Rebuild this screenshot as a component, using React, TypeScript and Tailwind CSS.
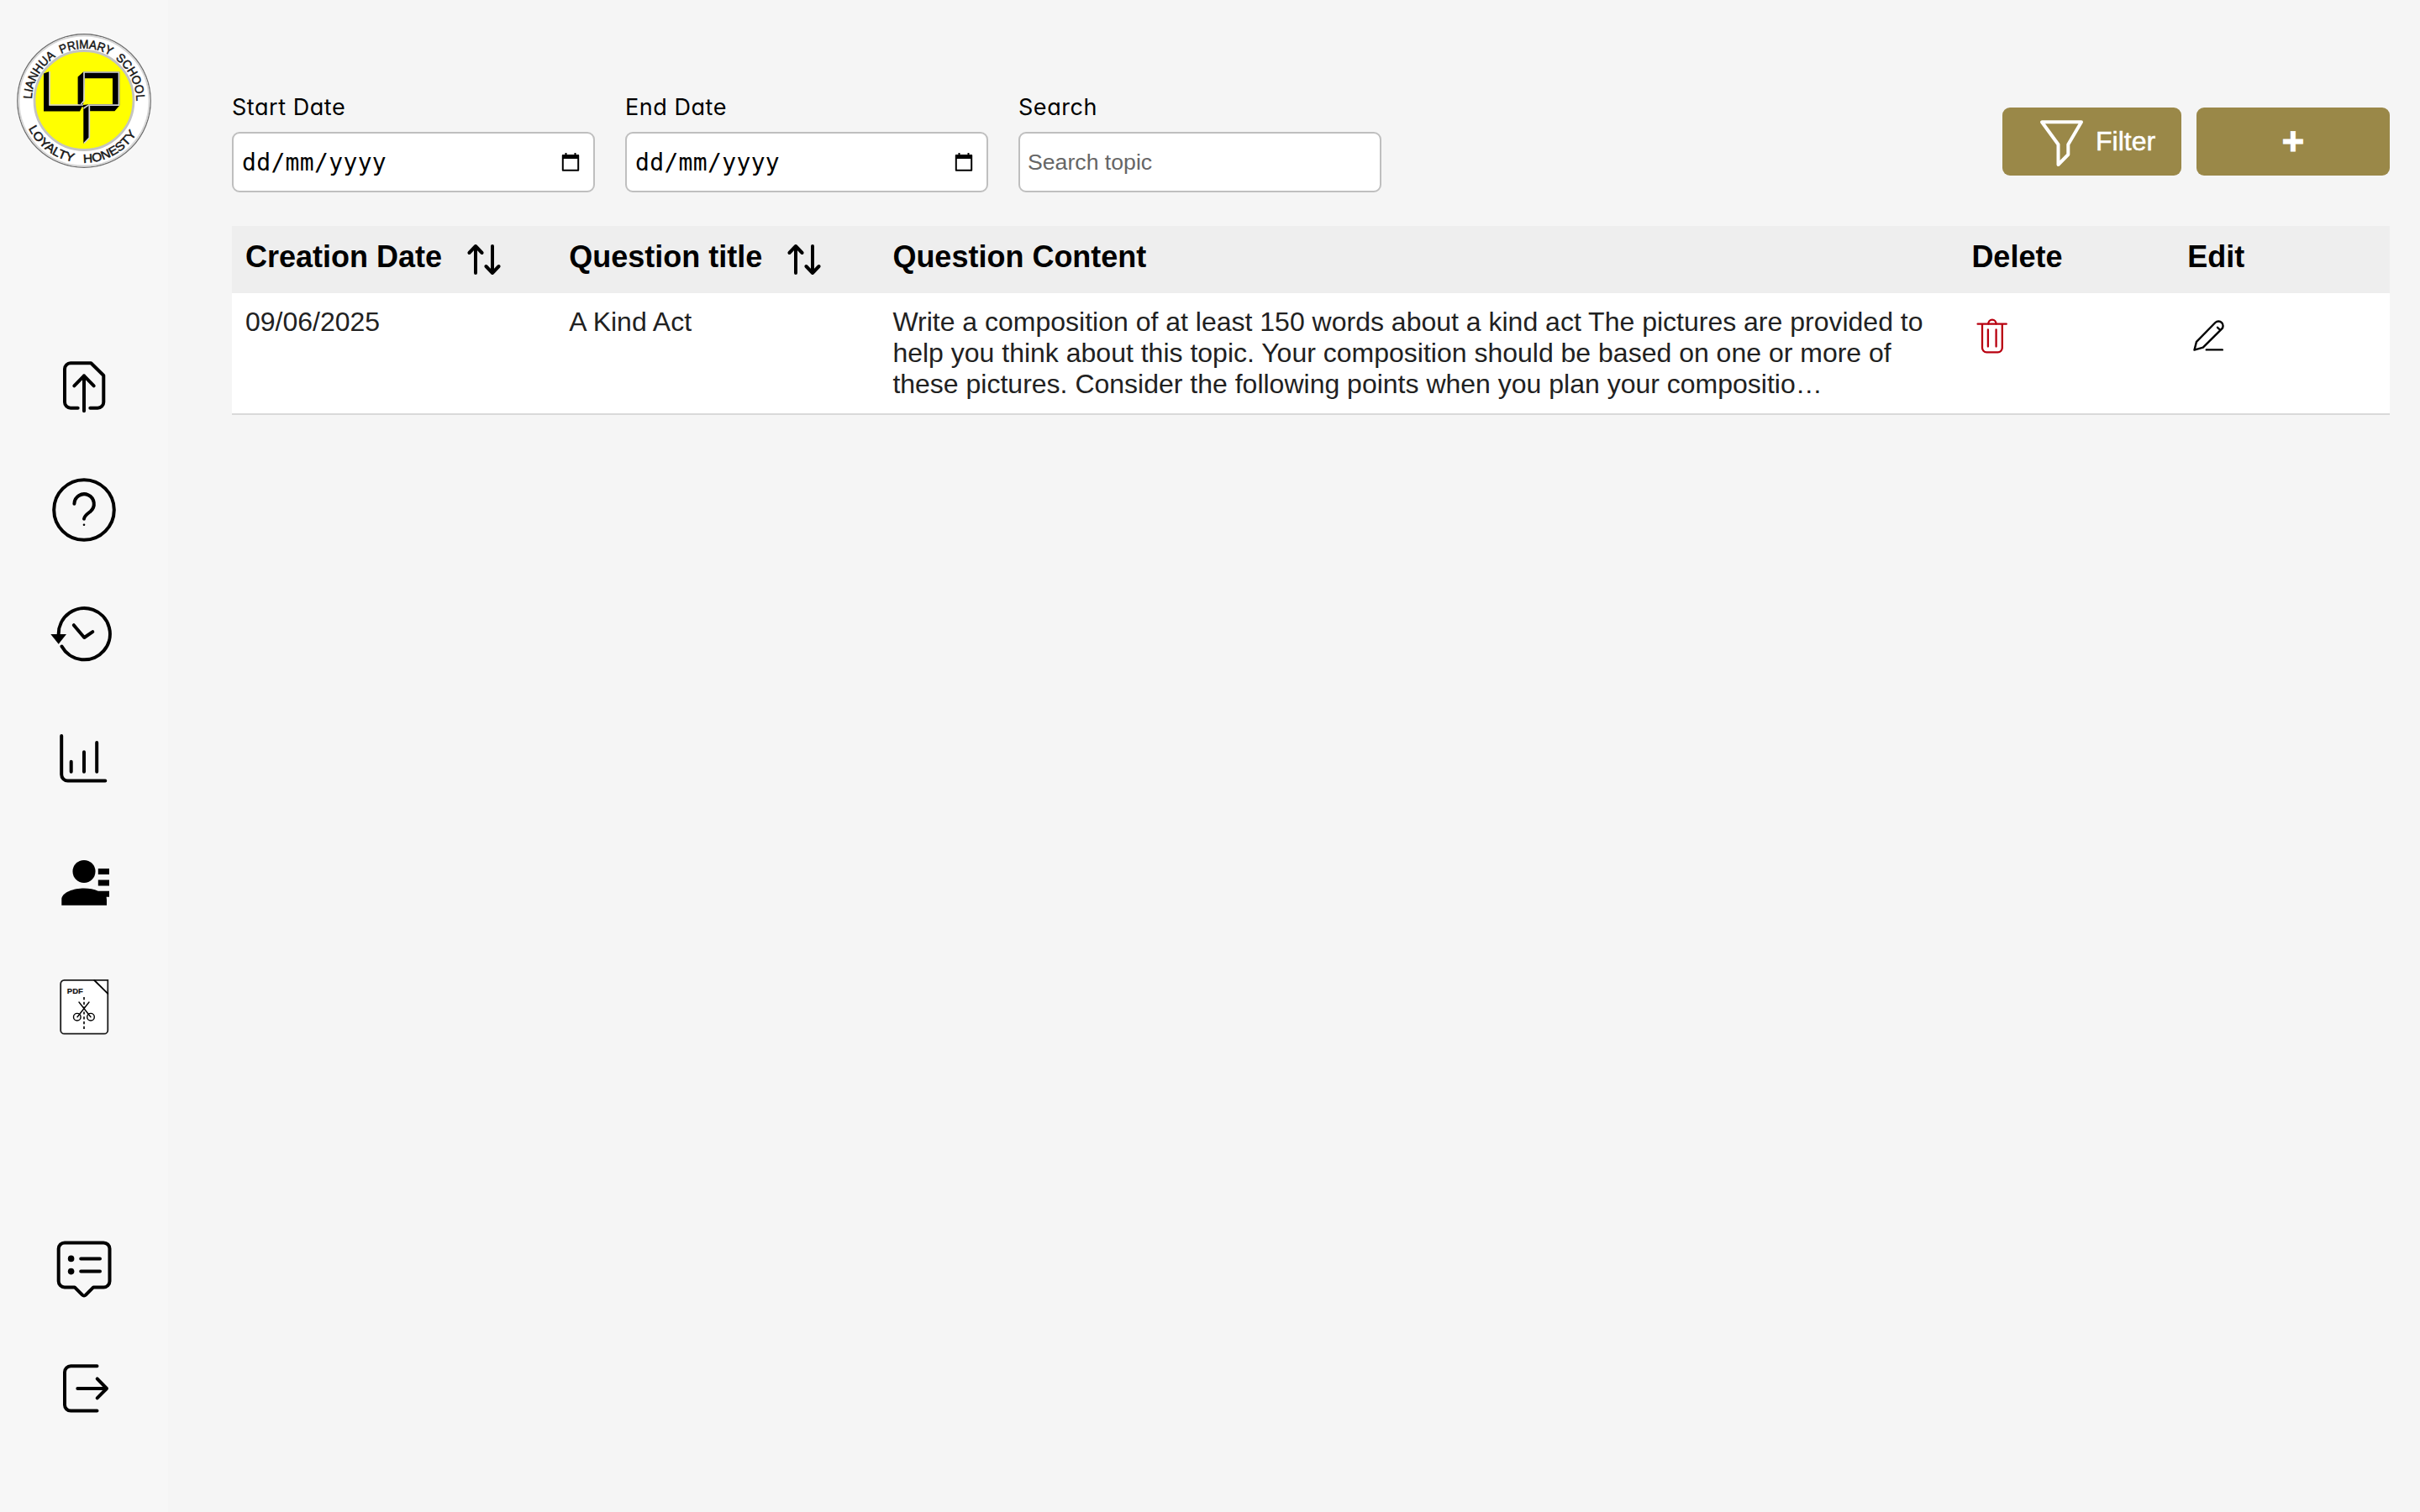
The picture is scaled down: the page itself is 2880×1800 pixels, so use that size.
import React from "react";

const LINE = {
  fill: "none",
  stroke: "#000",
  strokeWidth: 4,
  strokeLinecap: "round" as const,
  strokeLinejoin: "round" as const,
};

function NavIcon({ top, label, children }: { top: number; label: string; children: React.ReactNode }) {
  return (
    <button aria-label={label} className="block size-20 shrink-0">
      <svg className="size-20" viewBox={`60 ${top} 80 80`} {...LINE}>
        {children}
      </svg>
    </button>
  );
}

function Logo() {
  return (
    <svg className="mt-10 h-40 w-40 shrink-0" viewBox="20 40 160 160">
      <defs>
        <path id="topArc" d="M37.8 120 A62.2 62.2 0 1 1 162.2 120 V126" />
        <path id="bottomArc" d="M26.2 120 A73.8 73.8 0 0 0 173.8 120" />
      </defs>
      <circle cx="100" cy="120" r="79.2" fill="#fff" stroke="#6e6e6e" strokeWidth="1.4" />
      <circle cx="100" cy="120" r="77.6" fill="none" stroke="#d8d8d8" strokeWidth="2" />
      <circle cx="100" cy="119.5" r="59" fill="#ff0" stroke="#c4c4c0" strokeWidth="2.8" />
      <g fontFamily="Liberation Sans, Arial, sans-serif" fontSize="14.4" fill="#161616" stroke="#161616" strokeWidth="0.5">
        <text>
          <textPath href="#topArc" startOffset="2.2" textLength="60" lengthAdjust="spacingAndGlyphs">LIANHUA</textPath>
        </text>
        <text>
          <textPath href="#topArc" startOffset="69.5" textLength="61" lengthAdjust="spacingAndGlyphs">PRIMARY</textPath>
        </text>
        <text>
          <textPath href="#topArc" startOffset="137.3" textLength="58" lengthAdjust="spacingAndGlyphs">SCHOOL</textPath>
        </text>
        <text>
          <textPath href="#bottomArc" startOffset="34" textLength="69" lengthAdjust="spacingAndGlyphs">LOYALTY</textPath>
        </text>
        <text>
          <textPath href="#bottomArc" startOffset="115" textLength="75" lengthAdjust="spacingAndGlyphs">HONESTY</textPath>
        </text>
      </g>
      <g fill="#000">
        <path d="M52 87.5 L59 85 V125.5 H98.5 L95 132.5 H52Z" />
        <path d="M92.6 91.5 L99.3 85.6 H142.3 V125.5 L136.5 132.3 H107 V163.5 L99.3 170.8 V128 L92.6 124Z" />
        <path d="M101 93.3 H134 V124 H107 L99 125 Z" fill="#ff0" />
      </g>
      <g fill="none" stroke="#d2d2d2" strokeWidth="1.7">
        <path d="M59 85 V125 H99" />
        <path d="M96.5 124 L100 120 V86 H141.5 V125.2 H106.3 V164 L100 170.5" />
        <path d="M99.5 129 L106 124.6" />
      </g>
    </svg>
  );
}

function Sidebar() {
  return (
    <aside className="flex w-[200px] shrink-0 flex-col items-center bg-[#f7f7f7]">
      <Logo />
      <nav className="mt-[219px] flex flex-col gap-[68px]">
        <NavIcon top={419} label="Upload">
          <path d="M92.7 485.7 H84 A7 7 0 0 1 77 478.7 V439.3 A7 7 0 0 1 84 432.3 H108.3 L123.3 447 V478.7 A7 7 0 0 1 116.3 485.7 H107.3" />
          <path d="M100 489.3 V447.3 M88.3 459.3 L100 447.3 L111.7 459.3" />
        </NavIcon>
        <NavIcon top={567} label="Questions">
          <circle cx="100" cy="607" r="35.8" />
          <path d="M88.4 599.7 A11.7 11.7 0 1 1 107.7 608.8 C103.5 612 100.3 614 100 617.7" />
          <circle cx="100" cy="624.8" r="1.3" fill="#000" stroke="none" />
        </NavIcon>
        <NavIcon top={715} label="History">
          <path d="M73.5 769.5 A30.6 30.6 0 1 0 69.7 755" />
          <path d="M87.8 744.2 L100.3 759 L110.3 752.2" />
          <path d="M60.3 755 H79 L69.7 766.7Z" fill="#000" stroke="none" />
        </NavIcon>
        <NavIcon top={863} label="Statistics">
          <path d="M73.2 876 V922 A7.5 7.5 0 0 0 80.7 929.6 H125.3" />
          <path d="M84.7 906.8 V918.8 M100 895.3 V918.8 M115.2 884 V918.8" />
        </NavIcon>
        <NavIcon top={1011} label="Students">
          <g fill="#000" stroke="none">
            <circle cx="100" cy="1037.4" r="13.5" />
            <path d="M73.3 1077.8 V1071 C73.3 1062 88 1057.5 100 1057.5 C106 1057.5 112 1058.7 116.8 1060.7 H130 V1067.8 H126.6 L127 1071 V1077.8Z" />
            <path d="M116.8 1034 H130 V1041 H116.8Z M116.8 1047.4 H130 V1054.4 H116.8Z" />
          </g>
        </NavIcon>
        <NavIcon top={1159} label="Split PDF">
          <path d="M128.3 1166.9 H76.5 A4.3 4.3 0 0 0 72.2 1171.2 V1226.4 A4.3 4.3 0 0 0 76.5 1230.7 H124 A4.3 4.3 0 0 0 128.3 1226.4Z" fill="#fff" strokeWidth="1.8" stroke="#1c1c1c" strokeLinejoin="miter" />
          <path d="M112.3 1167 L128.3 1182.9" strokeWidth="1.8" />
          <text x="79.8" y="1183" fontFamily="Liberation Sans, Arial, sans-serif" fontWeight="700" fontSize="9.6" textLength="19" lengthAdjust="spacingAndGlyphs" fill="#111" stroke="#111" strokeWidth="0.2">PDF</text>
          <path d="M100 1187 V1227.3" strokeWidth="1.6" strokeLinecap="butt" strokeDasharray="3.2 2.6" />
          <g strokeWidth="1.4">
            <path d="M94 1193 L108 1210.7 M106 1193 L92 1210.7" />
            <circle cx="91.8" cy="1210.7" r="4.3" />
            <circle cx="108" cy="1210.7" r="4.3" />
          </g>
        </NavIcon>
      </nav>
      <div className="mt-[232px] flex flex-col gap-[62px]">
        <NavIcon top={1471} label="Feedback">
          <path d="M77 1479.4 H123.3 A7.2 7.2 0 0 1 130.5 1486.6 V1525.2 A7.2 7.2 0 0 1 123.3 1532.4 H111.2 L102 1541.6 A2.9 2.9 0 0 1 98 1541.6 L88.8 1532.4 H77 A7.2 7.2 0 0 1 69.7 1525.2 V1486.6 A7.2 7.2 0 0 1 77 1479.4Z" />
          <path d="M96.2 1498.4 H119 M96.2 1513.6 H119" />
          <g fill="#000" stroke="none">
            <circle cx="84.6" cy="1498.4" r="3.8" />
            <circle cx="84.6" cy="1513.6" r="3.8" />
          </g>
        </NavIcon>
        <NavIcon top={1613} label="Log out">
          <path d="M115.5 1626.3 H84.2 A7.2 7.2 0 0 0 77 1633.5 V1672.4 A7.2 7.2 0 0 0 84.2 1679.6 H115.5" />
          <path d="M92.3 1653 H127 M115.7 1641.4 L127 1653 L115.7 1664.4" />
        </NavIcon>
      </div>
    </aside>
  );
}

function Field({ label, children }: { label: string; children: React.ReactNode }) {
  return (
    <label className="flex w-[432px] flex-col">
      <span className="h-[46px] whitespace-nowrap pt-px font-['Inter'] text-[27px] leading-[32px] tracking-[0.55px] [font-feature-settings:'cv11']">
        {label}
      </span>
      <span className="flex h-[72px] items-center rounded-[9px] border-2 border-[#bfbfbf] bg-white pr-4 pl-[9px]">
        {children}
      </span>
    </label>
  );
}

function DateValue() {
  return (
    <>
      <span className="grow pl-px pt-0.5 font-['DejaVu_Sans_Mono',monospace] text-[28px] leading-none tracking-[0.35px]">dd/mm/yyyy</span>
      <svg className="h-6 w-[22px]" viewBox="0 0 22 24">
        <path d="M1.8 4 H20.2 V21.7 H1.8Z" fill="none" stroke="#000" strokeWidth="2" strokeLinejoin="round" />
        <path d="M1 3.5 H21 V8 H1Z M4.5 1 H6.5 V4 H4.5Z M15.5 1 H17.5 V4 H15.5Z" />
      </svg>
    </>
  );
}

function SortIcon() {
  return (
    <svg className="ml-[26px] size-12" viewBox="552 285 48 48" fill="none" stroke="#000" strokeWidth="4" strokeLinecap="round" strokeLinejoin="round">
      <path d="M566 325 V293 M558.4 301 L566 293 L573.6 301 M586 293 V325 M578.4 317 L586 325 L593.6 317" />
    </svg>
  );
}

const GRID = "grid grid-cols-[385.2px_385.2px_1284px_256.8px_256.8px]";

export default function App() {
  return (
    <div className="flex h-[1800px] w-[2880px] bg-[#f5f5f5] font-['Liberation_Sans',Arial,sans-serif] text-black">
      <Sidebar />
      <main className="flex grow flex-col pr-9 pl-[76px]">
        <div className="flex pt-[111px]">
          <div className="flex grow gap-9">
            <Field label="Start Date">
              <DateValue />
            </Field>
            <Field label="End Date">
              <DateValue />
            </Field>
            <Field label="Search">
              <span className="text-[26.67px] leading-none text-[#666]">Search topic</span>
            </Field>
          </div>
          <div className="mt-[17px] flex h-[81px] gap-[18px]">
            <button className="flex w-[213px] items-center rounded-[9px] bg-[#9a8848] pl-[38px] text-[32px] text-white">
              <svg className="mr-[9px] size-16 shrink-0" viewBox="2421 137 64 64" fill="none" stroke="#fff" strokeWidth="4" strokeLinecap="round" strokeLinejoin="round">
                <path d="M2430 145.3 H2477 L2461.3 172 V184 L2449.5 196 V172Z" />
              </svg>
              <span className="pb-0.5 [-webkit-text-stroke:0.5px_#fff]">Filter</span>
            </button>
            <button className="flex w-[230px] items-center justify-center rounded-[9px] bg-[#9a8848] pb-0.5 text-[46px] leading-none font-bold text-white [-webkit-text-stroke:0.8px_#fff]">
              +
            </button>
          </div>
        </div>

        <div className="mt-10 w-[2568px]">
          <div className={`${GRID} h-20 bg-[#eee] pt-4 text-[36px] leading-[41px] font-bold`}>
            <div className="flex pl-4">
              Creation Date
              <SortIcon />
            </div>
            <div className="flex pl-4">
              Question title
              <SortIcon />
            </div>
            <div className="pl-4">Question Content</div>
            <div className="pl-4">Delete</div>
            <div className="pl-4">Edit</div>
          </div>
          <div className={`${GRID} h-[145px] border-b-2 border-[#d9d9d9] bg-white pt-4 text-[32px] leading-[37px] text-[#212121]`}>
            <div className="pl-4">09/06/2025</div>
            <div className="pl-4">A Kind Act</div>
            <div className="pl-4 whitespace-nowrap">
              Write a composition of at least 150 words about a kind act The pictures are provided to
              <br />
              help you think about this topic. Your composition should be based on one or more of
              <br />
              these pictures. Consider the following points when you plan your compositio…
            </div>
            <div className="pl-4">
              <svg className="mt-[11px] size-12" viewBox="2346.4 376 48 48" fill="none" stroke="#b8000f" strokeWidth="2.3" strokeLinecap="round" strokeLinejoin="round">
                <path d="M2354 385.7 H2388.2 M2359.4 386 V414 A5.2 5.2 0 0 0 2364.6 419.3 H2378 A5.2 5.2 0 0 0 2383.2 414 V386" />
                <path d="M2366.3 392.5 V412.5 M2376 392.5 V412.5 M2366.7 385.5 A4.6 4.8 0 0 1 2375.9 385.5" />
              </svg>
            </div>
            <div className="pl-4">
              <svg className="mt-[11px] size-12" viewBox="2603.2 376 48 48" fill="none" stroke="#000" strokeWidth="2.4" strokeLinecap="round" strokeLinejoin="round">
                <path d="M2611.7 416.6 L2614.2 406.8 L2636.6 384 A5.4 5.4 0 0 1 2644.2 391.7 L2622 413.7Z M2639.2 389.8 L2642.6 393" />
                <path d="M2626 416.4 H2645" />
              </svg>
            </div>
          </div>
        </div>
      </main>
    </div>
  );
}
